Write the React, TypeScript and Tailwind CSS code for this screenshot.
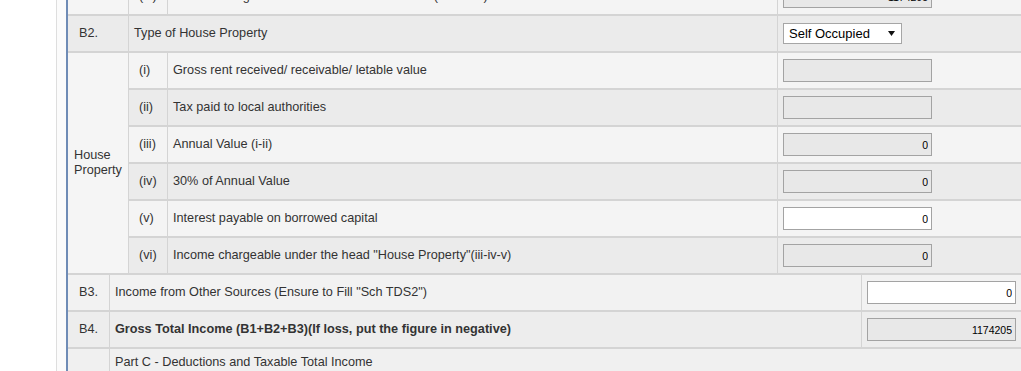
import React from "react";

const LINE = "border-[#d4d4d4]";

function Field({ value, white }: { value: string; white?: boolean }) {
  return (
    <input
      readOnly
      value={value}
      className={
        "block w-[149px] h-[23px] border border-[#a3a3a3] px-[3px] text-right text-[10.5px] text-black font-['Liberation_Sans',Arial,sans-serif] outline-none " +
        (white ? "bg-white" : "bg-[#e8e8e8]")
      }
    />
  );
}

function HouseRow({
  num,
  label,
  value,
  white,
  dark,
  last,
}: {
  num: string;
  label: string;
  value: string;
  white?: boolean;
  dark?: boolean;
  last?: boolean;
}) {
  return (
    <div
      className={
        "flex " +
        (last ? "h-[35px] " : "h-[37px] border-b-2 " + LINE + " ") +
        (dark ? "bg-[#ebebeb]" : "bg-[#f4f4f4]")
      }
    >
      <div className={"w-[39px] shrink-0 border-r " + LINE + " flex items-center pl-[10px]"}>{num}</div>
      <div className={"w-[610px] shrink-0 border-r " + LINE + " flex items-center pl-[5px] whitespace-nowrap"}>{label}</div>
      <div className="flex-1 flex items-center pl-[5px]">
        {value === "" ? <Field value="" /> : <Field value={value} white={white} />}
      </div>
    </div>
  );
}

export default function App() {
  return (
    <div className="w-[1021px] h-[371px] overflow-hidden bg-white flex font-['Liberation_Sans',Arial,sans-serif] text-[12.7px] text-[#333]">
      <div className="w-[56px] shrink-0 bg-white" />
      <div className="w-px shrink-0 bg-[#dedede]" />
      <div className="w-[9px] shrink-0 bg-[#fbfbfb]" />
      <div className="w-[2px] shrink-0 bg-[#6f8cb6]" />
      <div className="flex-1 min-w-0 flex flex-col mt-[-21px]">
        {/* partial salaries row */}
        <div className={"flex h-[37px] shrink-0 border-b-2 " + LINE + " bg-[#f4f4f4]"}>
          <div className={"w-[61px] shrink-0 border-r " + LINE + " bg-[#f5f5f5]"} />
          <div className={"w-[39px] shrink-0 border-r " + LINE + " flex items-center pl-[10px]"}>(vi)</div>
          <div className={"w-[610px] shrink-0 border-r " + LINE + " flex items-center pl-[5px] whitespace-nowrap"}>
            Income chargeable under the Head "Salaries" (ii+iii-iv-v)
          </div>
          <div className="flex-1 flex items-center pl-[5px]">
            <Field value="1174205" />
          </div>
        </div>

        {/* B2 */}
        <div className={"flex h-[37px] shrink-0 border-b-2 " + LINE + " bg-[#ebebeb]"}>
          <div className={"w-[61px] shrink-0 border-r " + LINE + " flex items-center pl-[11px]"}>B2.</div>
          <div className={"w-[649px] shrink-0 border-r " + LINE + " flex items-center pl-[5px]"}>Type of House Property</div>
          <div className="flex-1 flex items-center pl-[5px]">
            <div className="w-[119px] h-[21px] border border-[#a6a6a6] bg-white flex items-center justify-between pl-[5px] pr-[6px] text-[13px] text-black">
              <span>Self Occupied</span>
              <svg width="7" height="5" viewBox="0 0 7 5">
                <path d="M0 0H7L3.5 5Z" fill="#111" />
              </svg>
            </div>
          </div>
        </div>

        {/* House property block */}
        <div className={"flex shrink-0 border-b-2 " + LINE}>
          <div className={"w-[61px] shrink-0 border-r " + LINE + " bg-[#f5f5f5] flex items-center pl-[6px] leading-[15px]"}>
            House
            <br />
            Property
          </div>
          <div className="flex-1 flex flex-col">
            <HouseRow num="(i)" label="Gross rent received/ receivable/ letable value" value="" />
            <HouseRow num="(ii)" label="Tax paid to local authorities" value="" dark />
            <HouseRow num="(iii)" label="Annual Value (i-ii)" value="0" />
            <HouseRow num="(iv)" label="30% of Annual Value" value="0" dark />
            <HouseRow num="(v)" label="Interest payable on borrowed capital" value="0" white />
            <HouseRow
              num="(vi)"
              label={'Income chargeable under the head "House Property"(iii-iv-v)'}
              value="0"
              dark
              last
            />
          </div>
        </div>

        {/* B3 */}
        <div className={"flex h-[37px] shrink-0 border-b-2 " + LINE + " bg-[#f2f2f2]"}>
          <div className={"w-[42px] shrink-0 border-r " + LINE + " flex items-center pl-[11px]"}>B3.</div>
          <div className={"w-[752px] shrink-0 border-r " + LINE + " flex items-center pl-[5px]"}>
            Income from Other Sources (Ensure to Fill "Sch TDS2")
          </div>
          <div className="flex-1 flex items-center pl-[5px]">
            <Field value="0" white />
          </div>
        </div>

        {/* B4 */}
        <div className={"flex h-[37px] shrink-0 border-b-2 " + LINE + " bg-[#ededed]"}>
          <div className={"w-[42px] shrink-0 border-r " + LINE + " flex items-center pl-[11px]"}>B4.</div>
          <div className={"w-[752px] shrink-0 border-r " + LINE + " flex items-center pl-[5px] font-bold"}>
            Gross Total Income (B1+B2+B3)(If loss, put the figure in negative)
          </div>
          <div className="flex-1 flex items-center pl-[5px]">
            <Field value="1174205" />
          </div>
        </div>

        {/* Part C */}
        <div className="flex h-[27px] shrink-0 bg-[#f0f0f0]">
          <div className={"w-[42px] shrink-0 border-r " + LINE} />
          <div className="flex-1 flex items-center pl-[5px]">Part C - Deductions and Taxable Total Income</div>
        </div>
      </div>
    </div>
  );
}
